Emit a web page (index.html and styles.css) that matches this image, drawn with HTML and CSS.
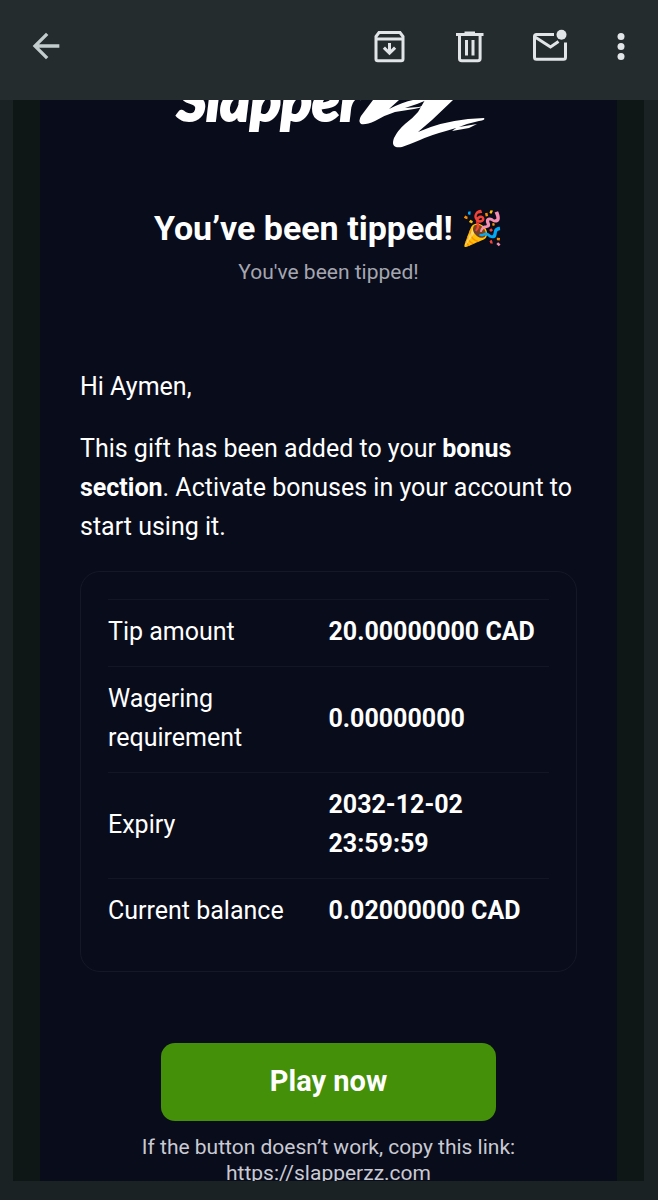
FILE: index.html
```
<!DOCTYPE html>
<html lang="en">

<head>
    <meta charset="UTF-8">
    <meta name="viewport" content="width=device-width, initial-scale=1.0">
    <title>You've been tipped!</title>
    <link rel="stylesheet" href="styles.css">
</head>

<body>
    <header class="app-bar">
        <button type="button" class="icon-button" aria-label="Back">
            <svg width="40" height="40" viewBox="0 0 24 24"><path d="M20 11H7.83l5.59-5.59L12 4l-8 8 8 8 1.41-1.41L7.83 13H20v-2z"/></svg>
        </button>
        <div class="actions">
            <button type="button" class="icon-button" aria-label="Archive">
                <svg width="40" height="40" viewBox="0 0 40 40">
                    <path class="line" d="M6 12.500V33a1.800 1.800 0 0 0 1.800 1.800h23.400a1.800 1.800 0 0 0 1.800-1.800V10.500L30 6.500H9l-3 4zM6 13h27"/>
                    <path d="M18 17h3v6.500l3-3 2.200 2.200-6.700 6.600-6.700-6.600 2.200-2.200 3 3z"/>
                </svg>
            </button>
            <button type="button" class="icon-button" aria-label="Delete">
                <svg width="40" height="40" viewBox="0 0 40 40">
                    <path class="line" d="M6 8.500h27.500M9.500 9v23.500a2.300 2.300 0 0 0 2.300 2.300h16a2.300 2.300 0 0 0 2.300-2.300V9M16.500 14v15.500M23 14v15.500"/>
                    <path d="M14.500 5.500h10.500v3H14.500z"/>
                </svg>
            </button>
            <button type="button" class="icon-button" aria-label="Mark as unread">
                <svg width="40" height="40" viewBox="0 0 40 40">
                    <path class="line" d="M24 8.500H6.500a2 2 0 0 0-2 2v20.700a2 2 0 0 0 2 2h27a2 2 0 0 0 2-2V16.500M5 11l15.500 10 8-5.500"/>
                    <circle cx="31.500" cy="8.800" r="5"/>
                </svg>
            </button>
            <button type="button" class="icon-button more" aria-label="More options">
                <svg width="12" height="40" viewBox="0 0 12 40"><circle cx="6" cy="10.500" r="3.500"/><circle cx="6" cy="20.500" r="3.500"/><circle cx="6" cy="30.500" r="3.500"/></svg>
            </button>
        </div>
    </header>

    <main class="mail">
        <div class="mail-card">
            <svg class="logo" width="320" height="50" viewBox="0 0 320 50" role="img" aria-label="Slapperzz">
                <text x="8" y="21">Slapper</text>
                <!-- brush strokes -->
                <path d="M204 0L192 16q-3 5 0 8 5 1 14-3 10-6 20-9l19-3q10-2 15-5l-10 3-14 1 12-4 10-4h-14q-10 2-24 9l10-9z"/>
                <path d="M256 0h28l-21 20-14 12q22-10 50-13l16-1q2 2-5 3l-12 3-8 3 18-3-8 4-17 3 4-3-10 3q-15 4-26 9-12 5-18 7-12 2-8-9 4-8 11-14 8-6 13-12l7-12z"/>
            </svg>

            <h1>You’ve been tipped! <span class="emoji">🎉</span></h1>
            <p class="subtitle">You've been tipped!</p>

            <div class="message">
                <p>Hi Aymen,</p>
                <p>This gift has been added to your <b>bonus section</b>. Activate bonuses in your account to start using it.</p>
            </div>

            <div class="details">
                <table>
                    <tr>
                        <th scope="row">Tip amount</th>
                        <td>20.00000000 CAD</td>
                    </tr>
                    <tr>
                        <th scope="row">Wagering requirement</th>
                        <td>0.00000000</td>
                    </tr>
                    <tr>
                        <th scope="row">Expiry</th>
                        <td>2032-12-02 23:59:59</td>
                    </tr>
                    <tr>
                        <th scope="row">Current balance</th>
                        <td>0.02000000 CAD</td>
                    </tr>
                </table>
            </div>

            <a href="#" class="play-button">Play now</a>
            <p class="note">If the button doesn’t work, copy this link: <a href="#">https://slapperzz.com</a></p>
        </div>
    </main>
</body>

</html>
```

FILE: styles.css
```
* {
    box-sizing: border-box;
}

body {
    display: flex;
    flex-direction: column;
    height: 100vh;
    margin: 0;
    padding-bottom: 19px;
    overflow: hidden;
    background-color: #1b2223;
    color: white;
    font-family: Roboto, sans-serif;
    font-size: 25px;
    line-height: 39px;
}

.app-bar {
    display: flex;
    flex-shrink: 0;
    align-items: center;
    justify-content: space-between;
    height: 100px;
    padding: 0 31px 8px 26px;
    background-color: #252c2e;
}

.actions {
    display: flex;
    gap: 40px;
}

.icon-button {
    display: flex;
    padding: 0;
    border: none;
    background: none;
    fill: #c4cdce;
}

.actions .icon-button {
    fill: #e1e5e8;
}

.more {
    margin-left: 5px;
}

.line {
    fill: none;
    stroke: #e1e5e8;
    stroke-width: 3;
}

.mail {
    flex: 1;
    min-height: 0;
    margin: 0 14px 0 13px;
    padding: 0 27px;
    overflow: hidden;
    background-color: #0f1616;
}

.mail-card {
    display: flex;
    flex-direction: column;
    align-items: center;
    min-height: 100%;
    padding: 0 40px;
    background-color: #090c1b;
}

.logo {
    fill: white;
    font-family: Lato, sans-serif;
    font-size: 57px;
    font-style: italic;
    font-weight: 900;
}

.logo text {
    stroke: white;
    stroke-width: 2;
}

h1 {
    margin: 57px 0 0;
    font-size: 34px;
    line-height: 42px;
}

p {
    margin: 0;
}

.subtitle {
    margin-top: 10px;
    color: #a5a6b0;
    font-size: 21px;
    line-height: 26px;
}

.message {
    display: flex;
    flex-direction: column;
    gap: 23px;
    width: 100%;
    margin-top: 82px;
}

.details {
    width: 100%;
    margin-top: 25px;
    padding: 27px 27px 26px;
    border: 1px solid #151827;
    border-radius: 20px;
}

table {
    width: 100%;
    table-layout: fixed;
    border-collapse: collapse;
}

th,
td {
    padding: 12px 0 15px;
    border-top: 1px solid #131624;
    text-align: left;
}

th {
    font-weight: normal;
}

td {
    font-weight: bold;
}

.play-button {
    margin-top: 71px;
    padding: 19px 109px 20px;
    border-radius: 14px;
    background-color: #449008;
    color: white;
    font-size: 29px;
    font-weight: bold;
    text-decoration: none;
}

.note {
    margin-top: 13px;
    color: #c9cad3;
    font-size: 21px;
    line-height: 26px;
    text-align: center;
}

.note a {
    display: block;
    color: inherit;
    text-decoration: none;
}
```
